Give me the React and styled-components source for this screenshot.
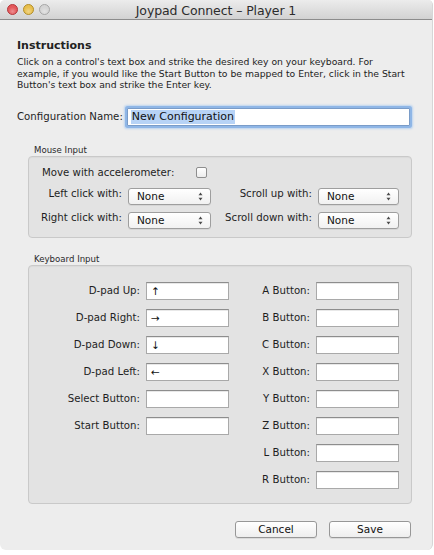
import styled, { createGlobalStyle } from 'styled-components';

const GlobalStyle = createGlobalStyle`
  html, body {
    margin: 0;
    padding: 0;
    background: #ffffff;
  }
  body {
    font-family: 'DejaVu Sans', 'Liberation Sans', sans-serif;
    color: #1a1a1a;
  }
`;

const mouseRows = [
  { left: 'Left click with:', right: 'Scroll up with:' },
  { left: 'Right click with:', right: 'Scroll down with:' },
];

const leftKeys = [
  { label: 'D-pad Up:', value: '↑' },
  { label: 'D-pad Right:', value: '→' },
  { label: 'D-pad Down:', value: '↓' },
  { label: 'D-pad Left:', value: '←' },
  { label: 'Select Button:', value: '' },
  { label: 'Start Button:', value: '' },
];

const rightKeys = ['A', 'B', 'C', 'X', 'Y', 'Z', 'L', 'R'];

const Stepper = () => (
  <svg width="5" height="9" viewBox="0 0 5 9">
    <path d="M2.5 0.5 L4.5 3.2 L0.5 3.2 Z" fill="#4a4a4a" />
    <path d="M2.5 8.5 L4.5 5.8 L0.5 5.8 Z" fill="#4a4a4a" />
  </svg>
);

const PopUp = () => (
  <Select>
    <span>None</span>
    <Stepper />
  </Select>
);

const App = () => {
  return (
    <>
      <GlobalStyle />
      <Window>
        <TitleBar>
          <Lights>
            <Light $color="#e4575a" $edge="#b33a3e" />
            <Light $color="#e8bf4c" $edge="#b18d2b" />
            <Light $color="#d4d4d4" $edge="#a6a6a6" />
          </Lights>
          <Title>Joypad Connect – Player 1</Title>
        </TitleBar>

        <Body>
          <Heading>Instructions</Heading>
          <Paragraph>
            Click on a control's text box and strike the desired key on your keyboard. For
            <br />
            example, if you would like the Start Button to be mapped to Enter, click in the Start
            <br />
            Button's text box and strike the Enter key.
          </Paragraph>

          <NameRow>
            <Label>Configuration Name:</Label>
            <NameField>
              <Selected>New Configuration</Selected>
            </NameField>
          </NameRow>

          <Group $top="19px">
            <GroupTitle>Mouse Input</GroupTitle>
            <GroupBox $pad="10px 13px 8px 8px">
              <CheckRow>
                <Label>Move with accelerometer:</Label>
                <Checkbox />
              </CheckRow>
              <MouseGrid>
                {mouseRows.map((row) => (
                  <Row key={row.left}>
                    <RightLabel>{row.left}</RightLabel>
                    <PopUp />
                    <RightLabel>{row.right}</RightLabel>
                    <PopUp />
                  </Row>
                ))}
              </MouseGrid>
            </GroupBox>
          </Group>

          <Group $top="16px">
            <GroupTitle>Keyboard Input</GroupTitle>
            <GroupBox $pad="16px 13px 14px 9px">
              <KeyGrid>
                {rightKeys.map((key, i) => (
                  <Row key={key}>
                    {leftKeys[i] ? (
                      <>
                        <RightLabel>{leftKeys[i].label}</RightLabel>
                        <KeyField>{leftKeys[i].value}</KeyField>
                      </>
                    ) : (
                      <>
                        <span />
                        <span />
                      </>
                    )}
                    <RightLabel>{key} Button:</RightLabel>
                    <KeyField />
                  </Row>
                ))}
              </KeyGrid>
            </GroupBox>
          </Group>

          <Footer>
            <PushButton>Cancel</PushButton>
            <PushButton>Save</PushButton>
          </Footer>
        </Body>
      </Window>
    </>
  );
};

export default App;

const Window = styled.div`
  width: 433px;
  height: 550px;
  box-sizing: border-box;
  background: #ededed;
  border-right: 1px solid #d6d6d6;
  border-radius: 5px 5px 6px 6px;
  overflow: hidden;
  display: flex;
  flex-direction: column;
`;

const TitleBar = styled.div`
  position: relative;
  height: 19px;
  flex-shrink: 0;
  background: linear-gradient(#ececec, #d2d2d2);
  border-bottom: 1px solid #8c8c8c;
  display: flex;
  align-items: center;
  justify-content: center;
`;

const Lights = styled.div`
  position: absolute;
  left: 7px;
  top: 4px;
  display: flex;
  gap: 5px;
`;

const Light = styled.span`
  width: 11px;
  height: 11px;
  border-radius: 50%;
  box-sizing: border-box;
  border: 1px solid ${(p) => p.$edge};
  background: radial-gradient(circle at 50% 70%, #ffffff55 0%, transparent 55%),
    ${(p) => p.$color};
`;

const Title = styled.div`
  font-size: 12.5px;
  color: #2c2c2c;
  letter-spacing: -0.1px;
  padding-top: 1px;
`;

const Body = styled.div`
  padding: 19px 20px 0 17px;
  display: flex;
  flex-direction: column;
`;

const Heading = styled.div`
  font-size: 11px;
  font-weight: bold;
  color: #222;
  line-height: 14px;
`;

const Paragraph = styled.div`
  font-size: 9.25px;
  line-height: 11.6px;
  color: #222;
  margin-top: 3px;
  white-space: nowrap;
`;

const NameRow = styled.div`
  display: flex;
  align-items: center;
  gap: 4px;
  margin-top: 17px;
`;

const Label = styled.span`
  font-size: 10.2px;
  color: #1e1e1e;
  white-space: nowrap;
`;

const RightLabel = styled(Label)`
  text-align: right;
`;

const NameField = styled.div`
  flex: 1;
  height: 18px;
  box-sizing: border-box;
  background: #ffffff;
  border: 1px solid #7a9cc8;
  box-shadow: 0 0 0 2px #8fb6e6, 0 0 2px 3px #bcd4f0;
  border-radius: 1px;
  display: flex;
  align-items: center;
  padding-left: 3px;
  margin-right: 2px;
`;

const Selected = styled.span`
  background: #b7d3f6;
  font-size: 11px;
  line-height: 14px;
  padding: 0 1px;
  color: #111;
`;

const Group = styled.div`
  margin: ${(p) => p.$top} 0 0 11px;
`;

const GroupTitle = styled.div`
  font-size: 8.6px;
  color: #2a2a2a;
  padding-left: 6px;
  line-height: 11px;
`;

const GroupBox = styled.div`
  background: #e3e3e3;
  border: 1px solid #c9c9c9;
  border-radius: 4px;
  padding: ${(p) => p.$pad};
  box-shadow: inset 0 1px 1px rgba(0, 0, 0, 0.04);
`;

const CheckRow = styled.div`
  display: flex;
  align-items: center;
  gap: 22px;
  padding-left: 5px;
  height: 12px;
`;

const Checkbox = styled.span`
  width: 11px;
  height: 11px;
  box-sizing: border-box;
  border: 1px solid #8e8e8e;
  border-radius: 2px;
  background: linear-gradient(#ffffff, #ececec);
`;

const MouseGrid = styled.div`
  display: grid;
  grid-template-columns: 85px 83px 95px 81px;
  column-gap: 6px;
  row-gap: 7px;
  margin-top: 9px;
`;

const Row = styled.div`
  display: contents;
`;

const Select = styled.div`
  height: 17px;
  box-sizing: border-box;
  border: 1px solid #9e9e9e;
  border-radius: 3px;
  background: linear-gradient(#ffffff, #f1f1f1);
  box-shadow: 0 1px 0 rgba(0, 0, 0, 0.06);
  display: flex;
  align-items: center;
  justify-content: space-between;
  padding: 0 7px 0 8px;
  font-size: 10.5px;
  color: #111;
  align-self: center;
`;

const KeyGrid = styled.div`
  display: grid;
  grid-template-columns: 102px 83px 75px 83px;
  column-gap: 6px;
  row-gap: 9px;
  align-items: center;
`;

const KeyField = styled.div`
  height: 18px;
  box-sizing: border-box;
  background: #ffffff;
  border: 1px solid #a9a9a9;
  border-top-color: #8d8d8d;
  box-shadow: inset 0 1px 0 #e8e8e8;
  font-size: 10.5px;
  line-height: 16px;
  padding-left: 4px;
  color: #111;
`;

const Footer = styled.div`
  display: flex;
  justify-content: flex-end;
  gap: 12px;
  margin-top: 17px;
  padding-right: 1px;
`;

const PushButton = styled.div`
  width: 82px;
  height: 17px;
  box-sizing: border-box;
  border: 1px solid #979797;
  border-radius: 3px;
  background: linear-gradient(#ffffff, #eeeeee);
  box-shadow: 0 1px 0 rgba(0, 0, 0, 0.08);
  font-size: 10.5px;
  line-height: 15px;
  text-align: center;
  color: #111;
`;
